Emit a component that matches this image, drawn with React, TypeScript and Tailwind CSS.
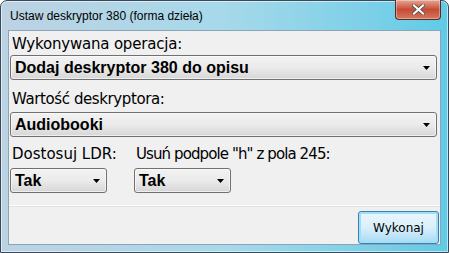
import React from 'react';

const Arrow: React.FC = () => (
  <svg width="7" height="4" viewBox="0 0 7 4" className="shrink-0">
    <path d="M0 0h7L3.5 4z" fill="#000" />
  </svg>
);

const Combo: React.FC<{ value: string; className?: string }> = ({ value, className }) => (
  <div
    className={`flex h-[25px] items-center justify-between rounded-[3px] border border-[#707070] bg-gradient-to-b from-[#f2f2f2] via-[#ebebeb] to-[#d6d6d6] pl-[4px] pr-[6px] shadow-[inset_0_0_0_1px_rgba(255,255,255,0.6)] ${className ?? ''}`}
  >
    <span className="font-['Liberation_Sans',sans-serif] text-[16px] font-bold leading-none text-black">{value}</span>
    <Arrow />
  </div>
);

export default function App() {
  return (
    <div className="h-[253px] w-[449px] overflow-hidden bg-white font-['DejaVu_Sans',sans-serif]">
      {/* aero frame */}
      <div className="flex h-full w-full flex-col rounded-t-[7px] border border-[#3a4a5a] bg-gradient-to-r from-[#bcd2e3] via-[#a6d9ea] to-[#5fcbe6] px-[7px] pb-[7px] shadow-[inset_0_0_0_1px_rgba(255,255,255,0.55)]">
        {/* title bar */}
        <div className="flex h-[29px] shrink-0 items-start justify-between">
          <span className="mt-[8px] pl-[2px] font-['Liberation_Sans',sans-serif] text-[12px] leading-[15px] text-black">
            Ustaw deskryptor 380 (forma dzieła)
          </span>
          <div className="-mt-px flex h-[20px] w-[46px] items-center justify-center rounded-b-[4px] border border-t-0 border-[#5a2a25] bg-gradient-to-b from-[#e6a595] via-[#c54b36] to-[#d6775c] shadow-[inset_0_0_0_1px_rgba(255,255,255,0.35)]">
            <svg width="13" height="11" viewBox="0 0 13 11">
              <path d="M2 1.5l9 8M11 1.5l-9 8" stroke="#444" strokeWidth="3.6" strokeLinecap="square" />
              <path d="M2 1.5l9 8M11 1.5l-9 8" stroke="#fff" strokeWidth="2.2" strokeLinecap="square" />
            </svg>
          </div>
        </div>

        {/* client area */}
        <div className="flex flex-1 flex-col border border-[#8da4b6] bg-[#f0f0f0]">
          <div className="flex h-[175px] shrink-0 flex-col border-b border-b-white px-[1px] pr-[3px]">
            <div className="mt-[4px] pl-[2px] text-[15px] leading-[18px] tracking-[-0.2px] text-black">Wykonywana operacja:</div>
            <Combo value="Dodaj deskryptor 380 do opisu" className="mt-[2px]" />
            <div className="mt-[10px] pl-[2px] text-[15px] leading-[18px] tracking-[-0.4px] text-black">Wartość deskryptora:</div>
            <Combo value="Audiobooki" className="mt-[4px]" />
            <div className="mt-[8px] grid grid-cols-[124px_1fr] pl-[2px] text-[15px] leading-[18px] text-black">
              <span>Dostosuj LDR:</span>
              <span className="tracking-[-0.9px]">Usuń podpole "h" z pola 245:</span>
            </div>
            <div className="mt-[5px] grid grid-cols-[124px_97px]">
              <Combo value="Tak" className="w-[97px]" />
              <Combo value="Tak" className="w-[97px]" />
            </div>
          </div>
          <div className="h-px bg-[#e3e3e3]" />
          <div className="flex flex-1 items-start justify-end pr-[1px] pt-[4px]">
            <button className="flex h-[33px] w-[81px] items-center justify-center rounded-[3px] border border-[#3c7fb1] bg-gradient-to-b from-[#eaf6fd] via-[#d9f0fc] to-[#a7d9f5] font-['DejaVu_Sans',sans-serif] text-[12px] text-black shadow-[inset_0_0_0_2px_#9fe0f5]">
              Wykonaj
            </button>
          </div>
        </div>
      </div>
    </div>
  );
}
